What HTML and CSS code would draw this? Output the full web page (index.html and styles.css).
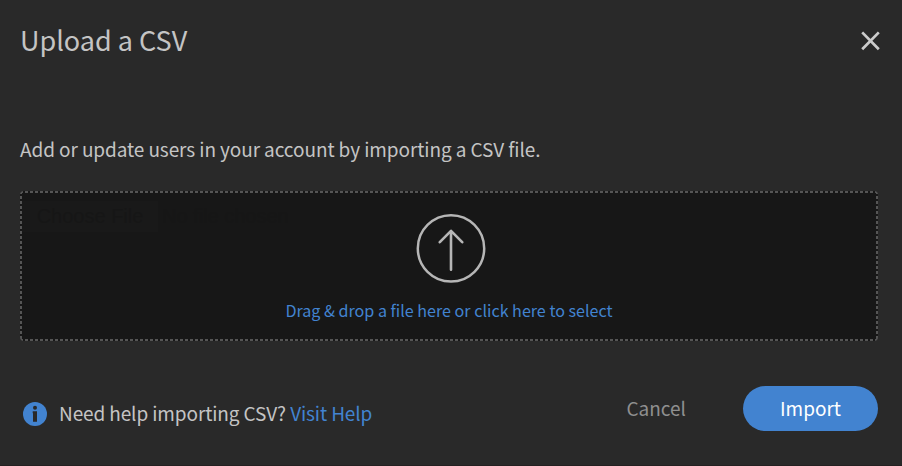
FILE: index.html
```html
<!DOCTYPE html>
<html lang="en">
<head>
<meta charset="utf-8">
<title>Upload a CSV</title>
<link rel="stylesheet" href="styles.css">
</head>
<body>
<main class="dialog">
  <header class="header">
    <h1 class="title">Upload a CSV</h1>
    <button class="close" aria-label="Close">
      <svg width="20" height="20" viewBox="0 0 20 20"><path d="M1.2 1.4 17.8 18.2M17.8 1.4 1.2 18.2" stroke="#cccccc" stroke-width="2.7" fill="none"/></svg>
    </button>
  </header>
  <p class="intro">Add or update users in your account by importing a CSV file.</p>
  <section class="dropzone">
    <div class="file"><span class="file-button">Choose File</span><span class="file-name">No file chosen</span></div>
    <svg class="upload" width="70" height="70" viewBox="0 0 70 70" fill="none" stroke="#b6b6b6">
      <circle cx="35" cy="35.4" r="33.2" stroke-width="2.5"/>
      <path d="M35 56.7V18.2M23.8 29.2 35 17.8 46.2 29.2" stroke-width="2.6" stroke-linecap="round" stroke-linejoin="round"/>
    </svg>
    <a class="select">Drag &amp; drop a file here or click here to select</a>
  </section>
  <footer class="footer">
    <svg class="info" width="24" height="24" viewBox="0 0 24 24">
      <circle cx="12" cy="12" r="12" fill="#4283d0"/>
      <circle cx="12" cy="5.8" r="2" fill="#292929"/>
      <path d="M9.7 9.2H14v10.6h-4v-8.6h-.3z" fill="#292929"/>
    </svg>
    <p class="help">Need help importing CSV? <a class="link">Visit Help</a></p>
    <button class="cancel">Cancel</button>
    <button class="import">Import</button>
  </footer>
</main>
</body>
</html>
```

FILE: styles.css
```css
* { box-sizing: border-box; }

body {
  margin: 0;
  background: #292929;
  color: #c4c4c4;
  font-family: "Noto Sans CJK SC", sans-serif;
  font-size: 19px;
}

h1, p { margin: 0; font-weight: 400; white-space: nowrap; }

button { border: 0; padding: 0; background: none; font: inherit; }

.dialog {
  height: 466px;
  padding: 20px 24px 0 20px;
  border-bottom: 1px solid #242021;
}

.header {
  display: flex;
  justify-content: space-between;
  height: 42px;
}

.title { font-size: 27px; line-height: 40px; }

.close {
  display: flex;
  align-items: center;
  height: 42px;
  margin-right: -3px;
}

.intro { margin-top: 72px; line-height: 30px; letter-spacing: -0.09px; }

.dropzone {
  --dash: #555 0 3px, transparent 3px 5px;
  position: relative;
  display: flex;
  flex-direction: column;
  align-items: center;
  height: 150px;
  margin-top: 27px;
  padding-top: 22px;
  border-radius: 4px;
  background:
    repeating-linear-gradient(90deg, var(--dash)) 0 0 / 100% 2px no-repeat,
    repeating-linear-gradient(90deg, var(--dash)) 0 100% / 100% 2px no-repeat,
    repeating-linear-gradient(var(--dash)) 0 0 / 2px 100% no-repeat,
    repeating-linear-gradient(var(--dash)) 100% 0 / 2px 100% no-repeat,
    #171717;
}

.file {
  position: absolute;
  left: 2px;
  top: 10px;
  display: flex;
  gap: 4px;
  color: #161616;
  font-family: "Liberation Sans", sans-serif;
  font-size: 20px;
  line-height: 31px;
}

.file-button { width: 136px; background: #191919; text-align: center; }

.upload { margin-left: 4px; }

.select {
  margin-top: 12px;
  color: #4283d0;
  font-size: 16.1px;
  line-height: 30px;
}

.footer {
  display: flex;
  align-items: center;
  height: 45px;
  margin-top: 45px;
}

.info { margin: 10px 12px 0 3px; }

.help { margin-top: 8px; letter-spacing: -0.11px; }

.link { color: #4283d0; }

.cancel { margin: 0 0 2px auto; color: #8f8f8f; }

.import {
  width: 135px;
  height: 45px;
  margin-left: 57px;
  padding-bottom: 2px;
  border-radius: 23px;
  background: #4283d0;
  color: #fff;
}
```
